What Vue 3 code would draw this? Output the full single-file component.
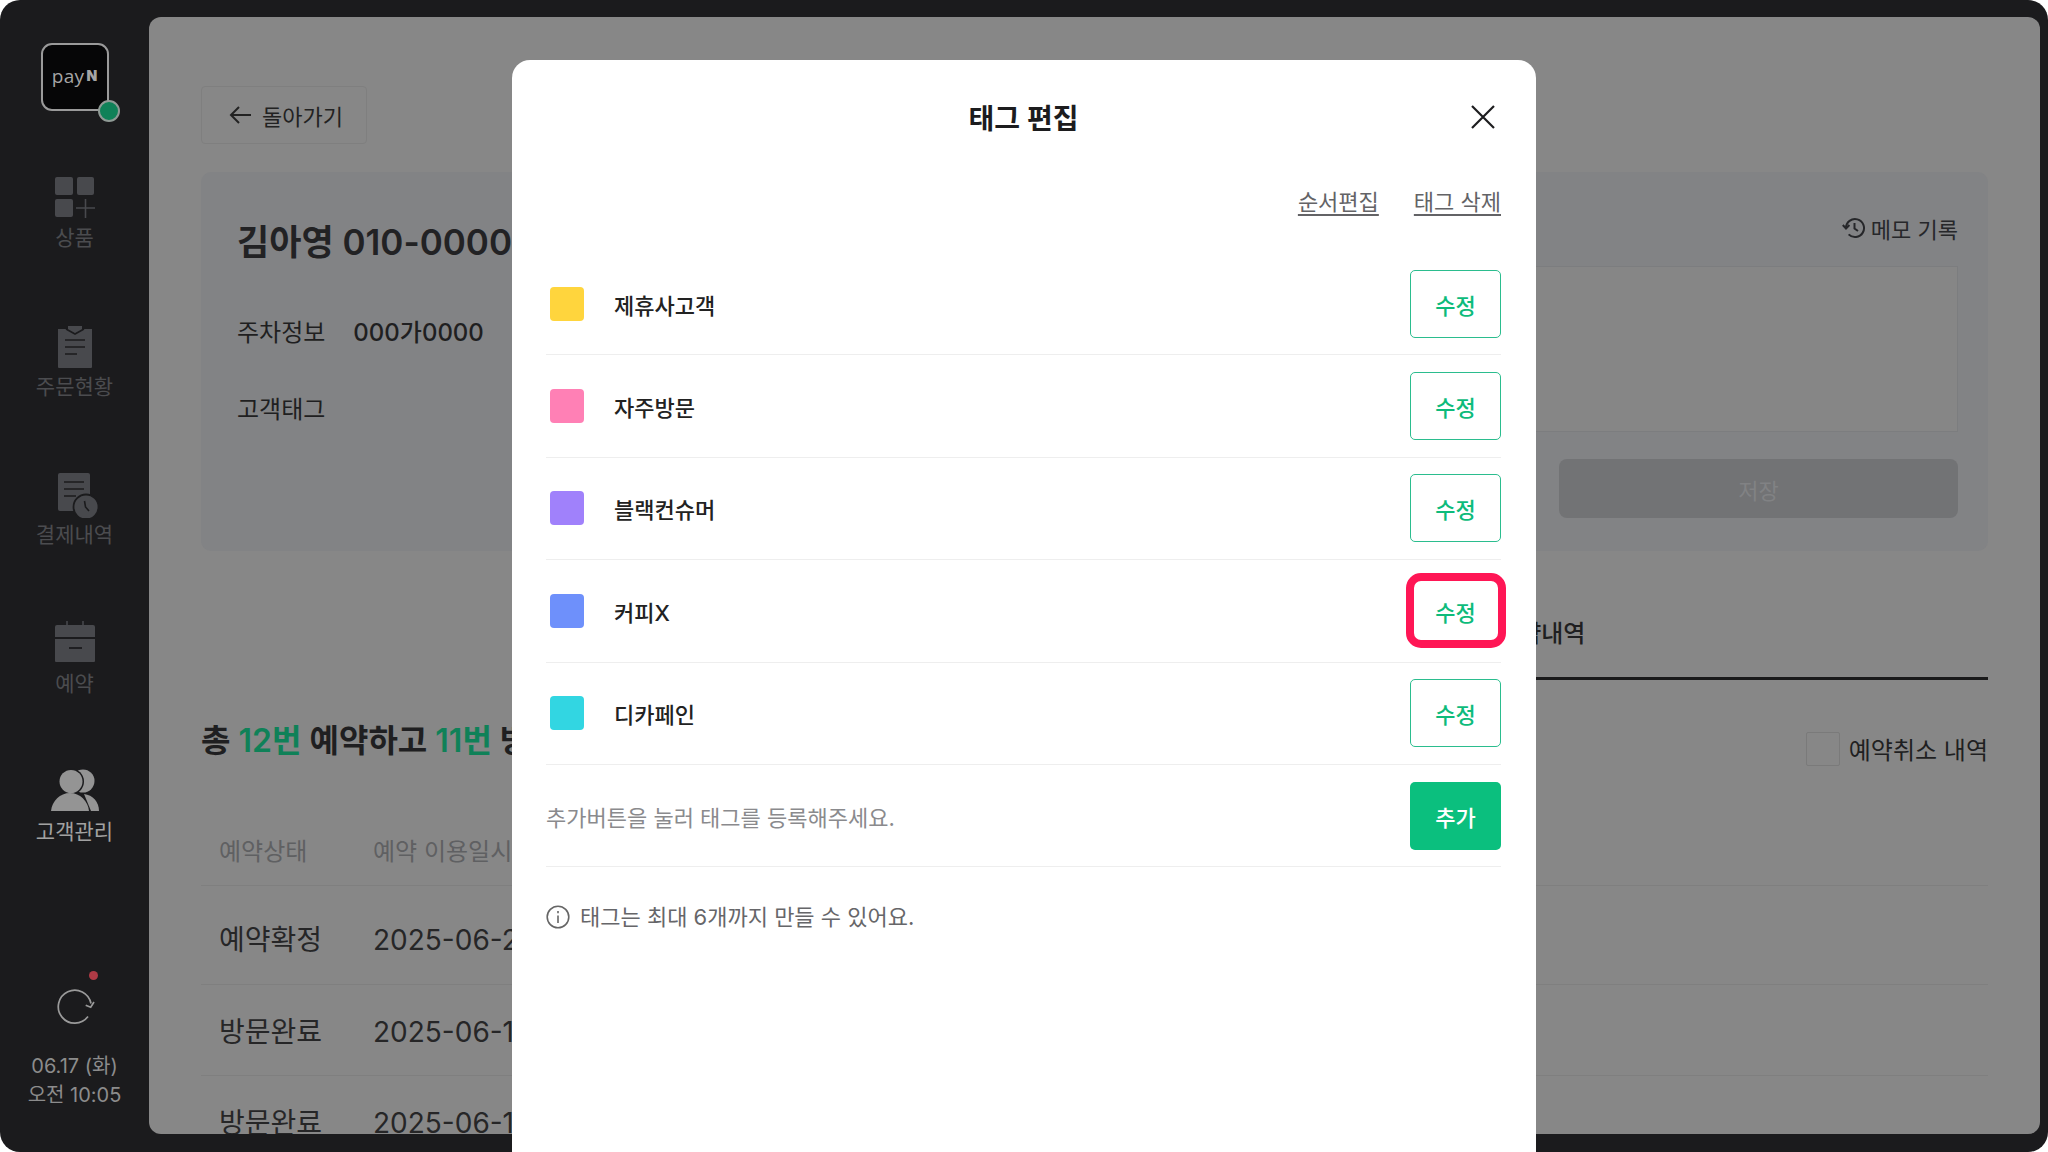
<script setup>
const navItems = [
  { key: 'product', label: '상품' },
  { key: 'order', label: '주문현황' },
  { key: 'payment', label: '결제내역' },
  { key: 'booking', label: '예약' },
  { key: 'customer', label: '고객관리', active: true },
]

const bookings = [
  { status: '예약확정', date: '2025-06-21 14:00' },
  { status: '방문완료', date: '2025-06-14 12:30' },
  { status: '방문완료', date: '2025-06-10 18:00' },
]

const tags = [
  { name: '제휴사고객', color: '#ffd53d' },
  { name: '자주방문', color: '#ff80b5' },
  { name: '블랙컨슈머', color: '#a081fb' },
  { name: '커피X', color: '#6e90fb', marked: true },
  { name: '디카페인', color: '#32d6e2' },
]
</script>

<template>
  <div class="frame">
    <aside class="sidebar">
      <div class="logo">
        <span class="logo-pay">pay</span><span class="logo-n">N</span>
        <i class="logo-dot"></i>
      </div>

      <nav class="nav">
        <div
          v-for="item in navItems"
          :key="item.key"
          class="nav-item"
          :class="[`nav-${item.key}`, { active: item.active }]"
        >
          <svg v-if="item.key === 'product'" width="48" height="48" viewBox="0 0 48 48">
            <rect x="4" y="4" width="18" height="18" rx="2" fill="currentColor" />
            <rect x="26" y="4" width="17" height="18" rx="2" fill="currentColor" />
            <rect x="4" y="26" width="18" height="18" rx="2" fill="currentColor" />
            <path d="M25 35h19M34.500 26v19" stroke="currentColor" stroke-width="1.600" fill="none" />
          </svg>
          <svg v-else-if="item.key === 'order'" width="48" height="48" viewBox="0 0 48 48">
            <path d="M7 7h10v-3h14v3h10v38a1 1 0 0 1-1 1H8a1 1 0 0 1-1-1z" fill="currentColor" />
            <path d="M15 7l9 5 9-5M14 18h20M14 25h20M14 32h12" stroke="#1b1b1d" stroke-width="1.600" fill="none" />
          </svg>
          <svg v-else-if="item.key === 'payment'" width="48" height="48" viewBox="0 0 48 48">
            <rect x="7" y="3" width="32" height="38" rx="2" fill="currentColor" />
            <path d="M13 12h20M13 19h20M13 26h12" stroke="#1b1b1d" stroke-width="1.600" fill="none" />
            <circle cx="35" cy="37" r="12.500" fill="currentColor" stroke="#1b1b1d" stroke-width="1.800" />
            <path d="M33.500 31l1 6 3.500 4" stroke="#1b1b1d" stroke-width="1.600" fill="none" />
          </svg>
          <svg v-else-if="item.key === 'booking'" width="48" height="48" viewBox="0 0 48 48">
            <path d="M16 2v6M32 2v6" stroke="currentColor" stroke-width="1.500" />
            <path d="M4 8a2 2 0 0 1 2-2h36a2 2 0 0 1 2 2v10H4zM4 20h40v22a1 1 0 0 1-1 1H5a1 1 0 0 1-1-1z" fill="currentColor" />
            <path d="M18 29h13" stroke="#1b1b1d" stroke-width="1.800" />
          </svg>
          <svg v-else width="48" height="48" viewBox="0 0 48 48">
            <circle cx="32" cy="14" r="11.500" fill="currentColor" />
            <path d="M40 44h8c0-9-6-16-15-17z" fill="currentColor" />
            <circle cx="20" cy="14.500" r="13" fill="#1b1b1d" />
            <path d="M30 44h8c-1-7-5-13-12-15z" fill="#1b1b1d" />
            <circle cx="20" cy="14.500" r="11.500" fill="currentColor" />
            <path d="M0 44c1-10 9-18 19-18s18 8 19 18z" fill="currentColor" />
          </svg>
          <span>{{ item.label }}</span>
        </div>
      </nav>

      <div class="status">
        <span class="refresh">
          <svg width="40" height="40" viewBox="0 0 40 40" fill="none" stroke="#9a9a9a" stroke-width="1.700">
            <path d="M33 30.600A16.500 16.500 0 1 1 36 17.500" />
            <path d="M30.700 19.300l5 2 3.300-5.300" />
          </svg>
          <i class="refresh-dot"></i>
        </span>
        <p>06.17 (화)</p>
        <p>오전 10:05</p>
      </div>
    </aside>

    <main class="main">
      <button class="back-btn" type="button">
        <svg width="22" height="20" viewBox="0 0 22 20" fill="none" stroke="#222" stroke-width="2">
          <path d="M22 10H2M10 2l-8 8 8 8" />
        </svg>
        돌아가기
      </button>

      <section class="panel">
        <div class="info">
          <h2 class="name">김아영 010-0000-0000</h2>
          <div class="info-row">
            <span class="info-label">주차정보</span>
            <span class="info-value">000가0000</span>
          </div>
          <div class="info-row tag-row">
            <span class="info-label">고객태그</span>
          </div>
        </div>
        <div class="memo">
          <div class="memo-head">
            <svg width="24" height="24" viewBox="0 0 24 24" fill="none" stroke="#26272a" stroke-width="2">
              <path d="M4 12a9 9 0 1 1 2.600 6.400" />
              <path d="M0.800 9l3.200 3.500L7.400 9" />
              <path d="M12.500 7v5.500l3.500 2.500" />
            </svg>
            메모 기록
          </div>
          <div class="memo-box">고객 메모를 입력해주세요. (최대 100자 작성 가능)</div>
          <div class="memo-actions">
            <button class="save-btn" type="button">저장</button>
          </div>
        </div>
      </section>

      <div class="tabs">
        <div class="tab">고객정보</div>
        <div class="tab active">예약내역</div>
      </div>

      <div class="summary">
        <h3 class="summary-title">총 <em>12번</em> 예약하고 <em>11번</em> 방문했어요</h3>
        <label class="cancel-check">
          <i class="checkbox"></i>
          예약취소 내역
        </label>
      </div>

      <div class="table">
        <div class="table-row table-head">
          <span class="col-status">예약상태</span>
          <span>예약 이용일시</span>
        </div>
        <div v-for="(row, i) in bookings" :key="i" class="table-row">
          <span class="col-status">{{ row.status }}</span>
          <span>{{ row.date }}</span>
        </div>
      </div>
    </main>

    <div class="modal-layer">
      <div class="modal">
        <header class="modal-head">
          <h1>태그 편집</h1>
          <button class="close-btn" type="button" aria-label="닫기">
            <svg width="24" height="24" viewBox="0 0 24 24" fill="none" stroke="#1d1d1f" stroke-width="2.200">
              <path d="M1 1l22 22M23 1L1 23" />
            </svg>
          </button>
        </header>

        <div class="modal-links">
          <a>순서편집</a>
          <a>태그 삭제</a>
        </div>

        <ul class="tag-list">
          <li v-for="tag in tags" :key="tag.name" class="tag-item">
            <i class="swatch" :style="{ background: tag.color }"></i>
            <span class="tag-name">{{ tag.name }}</span>
            <button class="edit-btn" :class="{ marked: tag.marked }" type="button">수정</button>
          </li>
          <li class="tag-item">
            <span class="tag-hint">추가버튼을 눌러 태그를 등록해주세요.</span>
            <button class="add-btn" type="button">추가</button>
          </li>
        </ul>

        <p class="notice">
          <svg width="24" height="24" viewBox="0 0 24 24" fill="none" stroke="#666" stroke-width="1.600">
            <circle cx="12" cy="12" r="10.800" />
            <path d="M12 10.500v7.500M12 6v2.200" />
          </svg>
          태그는 최대 6개까지 만들 수 있어요.
        </p>
      </div>
    </div>
  </div>
</template>

<style scoped>
* {
  box-sizing: border-box;
}

.frame {
  position: relative;
  display: flex;
  height: 1152px;
  padding: 17px 8px 18px 0;
  border-radius: 20px;
  overflow: hidden;
  background: #1b1b1d;
  font-family: Inter, "Noto Sans CJK KR", sans-serif;
  color: #1f1f21;
}

.sidebar {
  flex: none;
  width: 149px;
  margin-top: -17px;
  margin-bottom: -18px;
  position: relative;
  display: flex;
  flex-direction: column;
  align-items: center;
  padding-top: 43px;
}

.logo {
  position: relative;
  width: 68px;
  height: 68px;
  display: flex;
  align-items: center;
  justify-content: center;
  gap: 2px;
  padding-bottom: 3px;
  border: 2px solid #9a9a9a;
  border-radius: 11px;
  background: #060607;
  color: #a5a5a5;
}

.logo-pay {
  font-family: "Open Sans", sans-serif;
  font-size: 19px;
  letter-spacing: 0.3px;
}

.logo-n {
  font-size: 14px;
  font-weight: 900;
}

.logo-dot {
  position: absolute;
  right: -13px;
  bottom: -13px;
  width: 22px;
  height: 22px;
  border: 2px solid #8f9a95;
  border-radius: 50%;
  background: #0f8158;
}

.nav {
  display: flex;
  flex-direction: column;
  align-items: center;
  margin-top: 62px;
}

.nav-item {
  display: flex;
  flex-direction: column;
  align-items: center;
  height: 148.500px;
  color: #48494d;
  font-size: 21px;
  line-height: 30px;
  white-space: nowrap;
}

.nav-item span {
  color: #4b4c4f;
  margin-top: 2px;
}

.nav-item svg {
  display: block;
}

.nav-item.active {
  color: #949494;
}

.nav-item.active span {
  color: #a2a2a2;
}

.status {
  margin-top: auto;
  padding-bottom: 42px;
  text-align: center;
  color: #8c8c8c;
  font-size: 20px;
  line-height: 29px;
}

.status p {
  margin: 0;
  white-space: nowrap;
}

.refresh {
  position: relative;
  display: block;
  width: 40px;
  height: 40px;
  margin: 0 auto 26px;
}

.refresh svg {
  display: block;
}

.refresh-dot {
  position: absolute;
  right: -3px;
  top: -15px;
  width: 9px;
  height: 9px;
  border-radius: 50%;
  background: #ae3a45;
}

.main {
  flex: 1;
  min-width: 0;
  padding: 69px 52px 0;
  border-radius: 12px;
  overflow: hidden;
  background: #878787;
}

.back-btn {
  display: flex;
  align-items: center;
  gap: 11px;
  width: 166px;
  height: 58px;
  padding: 0 0 0 27px;
  border: 1px solid #7f7f7f;
  border-radius: 4px;
  background: transparent;
  font: inherit;
  font-size: 22px;
  color: #222;
}

.panel {
  display: grid;
  grid-template-columns: 1fr 953px;
  margin-top: 28px;
  padding: 40px 30px 33px 36px;
  border-radius: 10px;
  background: #828385;
}

.name {
  margin: 5px 0 0;
  font-size: 35px;
  font-weight: 600;
  line-height: 50px;
  white-space: nowrap;
  color: #222224;
}

.info-row {
  display: flex;
  gap: 28px;
  margin-top: 49px;
  font-size: 24px;
  line-height: 34px;
}

.tag-row {
  margin-top: 43px;
}

.info-value {
  font-weight: 500;
}

.memo-head {
  display: flex;
  align-items: center;
  justify-content: flex-end;
  gap: 5px;
  height: 32px;
  font-size: 22px;
  color: #26272a;
}

.memo-box {
  height: 166px;
  margin-top: 22px;
  padding: 16px 20px;
  border: 1px solid #7c7d7f;
  background: #868686;
  font-size: 22px;
  line-height: 34px;
  color: #5f6062;
}

.memo-actions {
  display: flex;
  gap: 16px;
  margin-top: 27px;
  justify-content: flex-end;
}

.save-btn {
  width: 399px;
  height: 59px;
  border: 0;
  border-radius: 8px;
  background: #727375;
  font: inherit;
  font-size: 22px;
  color: #818284;
}

.tabs {
  display: flex;
  margin-top: 66px;
}

.tab {
  flex: 1;
  height: 63px;
  font-size: 24px;
  font-weight: 500;
  line-height: 34px;
  text-align: center;
}

.tab.active {
  border-bottom: 3px solid #1a1a1b;
}

.summary {
  display: flex;
  justify-content: space-between;
  align-items: flex-end;
  height: 48px;
  margin-top: 38px;
}

.summary-title {
  align-self: flex-start;
  margin: 0;
  font-size: 32px;
  font-weight: 600;
  line-height: 46px;
  white-space: nowrap;
}

.summary-title em {
  font-style: normal;
  color: #0f8158;
}

.cancel-check {
  display: flex;
  align-items: center;
  gap: 9px;
  font-size: 24px;
  color: #1f1f21;
}

.checkbox {
  width: 34px;
  height: 34px;
  border: 1px solid #7a7a7a;
  border-radius: 2px;
}

.table {
  margin-top: 69px;
}

.table-row {
  display: flex;
  height: 91px;
  padding: 32px 0 0 18px;
  border-bottom: 1px solid #7f7f7f;
  font-size: 28px;
  line-height: 30px;
  color: #262627;
  white-space: nowrap;
}

.table-head {
  height: 51px;
  padding-top: 0;
  font-size: 24px;
  line-height: 34px;
  color: #5f6062;
}

.table-head + .table-row {
  height: 99px;
  padding-top: 39px;
}

.col-status {
  width: 154px;
}

.modal-layer {
  position: absolute;
  inset: 0;
  display: flex;
  justify-content: center;
  padding-top: 60px;
}

.modal {
  width: 1024px;
  height: 1200px;
  flex: none;
  padding: 0 35px 0 34px;
  border-radius: 18px;
  background: #fff;
}

.modal-head {
  position: relative;
  display: flex;
  justify-content: center;
  align-items: center;
  height: 114px;
}

.modal-head h1 {
  margin: 0;
  font-size: 28px;
  font-weight: 600;
  color: #1c1c1e;
}

.close-btn {
  position: absolute;
  right: 6px;
  top: 45px;
  padding: 0;
  border: 0;
  background: none;
  line-height: 0;
}

.modal-links {
  display: flex;
  justify-content: flex-end;
  gap: 35px;
  margin-top: 12px;
  font-size: 22px;
  line-height: 32px;
  color: #636366;
}

.modal-links a {
  text-decoration: underline;
  text-underline-offset: 4px;
  white-space: nowrap;
}

.tag-list {
  margin: 35px 0 0;
  padding: 0;
  list-style: none;
}

.tag-item {
  display: flex;
  align-items: center;
  height: 102.400px;
  border-bottom: 1.500px solid #eeeeee;
}

.swatch {
  flex: none;
  width: 34px;
  height: 34px;
  margin-left: 4px;
  border-radius: 4px;
}

.tag-name {
  margin-left: 30px;
  font-size: 22px;
  font-weight: 500;
  color: #222;
}

.tag-hint {
  font-size: 22px;
  color: #8a8a8d;
}

.edit-btn,
.add-btn {
  position: relative;
  width: 91px;
  height: 68px;
  margin-left: auto;
  border-radius: 5px;
  font: inherit;
  font-size: 22px;
  font-weight: 500;
}

.edit-btn {
  border: 1.500px solid #2bbd8e;
  background: #fff;
  color: #0dbb7b;
}

.edit-btn.marked::after {
  content: "";
  position: absolute;
  inset: -4.500px -5.500px;
  border: 8px solid #ff1655;
  border-radius: 15px;
}

.add-btn {
  border: 0;
  background: #0bbf7e;
  color: #fff;
}

.notice {
  display: flex;
  align-items: center;
  gap: 10px;
  margin: 34px 0 0;
  font-size: 22px;
  line-height: 32px;
  color: #666669;
}
</style>
